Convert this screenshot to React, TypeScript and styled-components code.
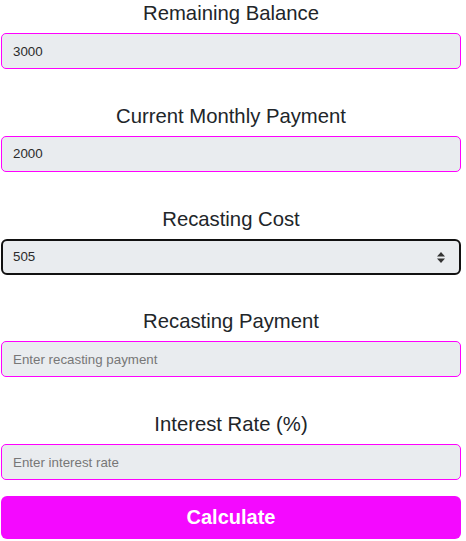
import styled, { createGlobalStyle } from "styled-components";

const GlobalStyle = createGlobalStyle`
  body {
    margin: 0;
    background: #ffffff;
    font-family: "Liberation Sans", Arial, sans-serif;
  }
`;

const Form = styled.form`
  display: flex;
  flex-direction: column;
  width: 460px;
  margin-left: 1px;
  padding-top: 1px;
`;

const Group = styled.div`
  display: flex;
  flex-direction: column;
  margin-bottom: 34.75px;

  &:last-of-type {
    margin-bottom: 16px;
  }
`;

const Label = styled.label`
  font-size: 20.3px;
  line-height: 24px;
  color: #212529;
  text-align: center;
  margin-bottom: 8px;
`;

const Input = styled.input`
  box-sizing: border-box;
  width: 100%;
  height: 36px;
  padding: 0 11px;
  border: 1px solid #ff00ff;
  border-radius: 5px;
  background: #e9ecef;
  font-family: "Liberation Sans", Arial, sans-serif;
  font-size: 13.33px;
  color: #2b2b2b;
  outline: none;

  &::placeholder {
    color: #777;
  }
`;

const SelectWrap = styled.div`
  position: relative;
  width: 100%;
`;

const Select = styled.select`
  box-sizing: border-box;
  width: 100%;
  height: 36px;
  padding: 0 10px;
  border: 2px solid #111;
  border-radius: 6px;
  background: #e9ecef;
  font-family: "Liberation Sans", Arial, sans-serif;
  font-size: 13.33px;
  color: #2b2b2b;
  appearance: none;
  outline: none;
`;

const Arrows = styled.svg`
  position: absolute;
  right: 16px;
  top: 13px;
  pointer-events: none;
`;

const Button = styled.button`
  width: 100%;
  height: 43px;
  border: none;
  border-radius: 6px;
  background: #f409ff;
  color: #ffffff;
  font-family: "Liberation Sans", Arial, sans-serif;
  font-size: 20px;
  font-weight: bold;
  cursor: pointer;
`;

export default function App() {
  return (
    <>
      <GlobalStyle />
      <Form onSubmit={(e) => e.preventDefault()}>
        <Group>
          <Label>Remaining Balance</Label>
          <Input type="text" defaultValue="3000" />
        </Group>
        <Group>
          <Label>Current Monthly Payment</Label>
          <Input type="text" defaultValue="2000" />
        </Group>
        <Group>
          <Label>Recasting Cost</Label>
          <SelectWrap>
            <Select defaultValue="505">
              <option value="505">505</option>
              <option value="250">250</option>
              <option value="1000">1000</option>
            </Select>
            <Arrows width="8" height="11" viewBox="0 0 8 11">
              <path d="M4 0 L8 4.5 L0 4.5 Z" fill="#333" />
              <path d="M0 6.5 L8 6.5 L4 11 Z" fill="#333" />
            </Arrows>
          </SelectWrap>
        </Group>
        <Group>
          <Label>Recasting Payment</Label>
          <Input type="text" placeholder="Enter recasting payment" />
        </Group>
        <Group>
          <Label>Interest Rate (%)</Label>
          <Input type="text" placeholder="Enter interest rate" />
        </Group>
        <Button type="submit">Calculate</Button>
      </Form>
    </>
  );
}
